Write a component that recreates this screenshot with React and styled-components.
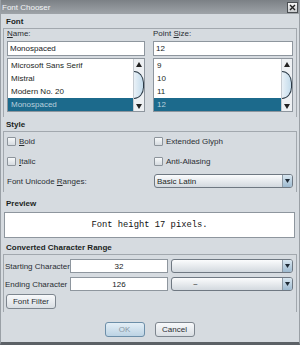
import React from 'react';
import styled, { createGlobalStyle } from 'styled-components';

const Global = createGlobalStyle`
  html, body { margin: 0; padding: 0; background: #d6dbe0; }
  body {
    font-family: "Liberation Sans", Arial, sans-serif;
    font-size: 8px;
    color: #1e2226;
  }
  * { box-sizing: border-box; }
`;

const Window = styled.div`
  width: 300px;
  height: 345px;
  display: flex;
  flex-direction: column;
  background: #d6dbe0;
  border-left: 1px solid #9aa0a6;
  border-right: 1px solid #9aa0a6;
  border-bottom: 3px solid #5c6166;
  overflow: hidden;
`;

const TitleBar = styled.div`
  height: 14px;
  flex: none;
  display: flex;
  align-items: center;
  justify-content: space-between;
  padding: 0 1px 0 1px;
  background: linear-gradient(#7b8085, #9ea3a8);
  color: #f2f4f6;
  font-size: 8px;
`;

const CloseBox = styled.div`
  width: 11px;
  height: 11px;
  display: flex;
  align-items: center;
  justify-content: center;
  border: 1px solid #4a4e52;
  background: linear-gradient(#f6f6f6, #c9cccf);
`;

const Header = styled.div`
  height: 14px;
  flex: none;
  display: flex;
  align-items: center;
  padding-left: 5px;
  margin-top: ${p => p.$mt || 0}px;
  font-weight: bold;
  color: #1b1f23;
`;

const Panel = styled.div`
  margin: 0 2px;
  border-top: 1px solid #a2a8ae;
  border-left: 1px solid #a2a8ae;
  border-right: 1px solid #a2a8ae;
  flex: none;
`;

const TwoCol = styled.div`
  display: grid;
  grid-template-columns: 138px 1fr;
  column-gap: 8px;
  row-gap: ${p => p.$rowGap || 0}px;
  padding: ${p => p.$pad};
`;

const Column = styled.div`
  display: flex;
  flex-direction: column;
`;

const Label = styled.div`
  height: 10px;
  line-height: 10px;
  color: #2a2e33;
  white-space: nowrap;
`;

const U = styled.span`
  text-decoration: underline;
  text-underline-offset: 1px;
`;

const Field = styled.div`
  height: 15px;
  margin-top: 2px;
  background: #fff;
  border: 1px solid #8e969e;
  display: flex;
  align-items: center;
  justify-content: ${p => (p.$center ? 'center' : 'flex-start')};
  padding: 0 2px;
  font-size: 8px;
  color: #15191d;
`;

const ListBox = styled.div`
  height: 54px;
  margin-top: 2px;
  border: 1px solid #8e969e;
  background: #fff;
  display: flex;
`;

const Items = styled.div`
  flex: 1;
  display: flex;
  flex-direction: column;
`;

const Item = styled.div`
  height: 13px;
  display: flex;
  align-items: center;
  padding-left: 3px;
  background: ${p => (p.$sel ? '#1c6a8c' : 'transparent')};
  color: ${p => (p.$sel ? '#b9d0dd' : '#1b1f23')};
`;

const ScrollBar = styled.div`
  width: 11px;
  display: flex;
  flex-direction: column;
  background: #edf0f3;
  border-left: 1px solid #c5cbd1;
`;

const Arrow = styled.div`
  height: 10px;
  display: flex;
  align-items: center;
  justify-content: center;
`;

const Track = styled.div`
  flex: 1;
  display: flex;
  flex-direction: column;
  padding-top: 2px;
`;

const Thumb = styled.div`
  height: 28px;
  width: 10px;
  background: linear-gradient(90deg, #e9f1f7, #c3dbeb);
  border: 1px solid #2d3b47;
  border-left: none;
  border-radius: 0 12px 12px 0 / 0 14px 14px 0;
`;

const CheckRow = styled.div`
  height: 14px;
  display: flex;
  align-items: center;
  gap: 3px;
  padding-left: ${p => p.$indent || 0}px;
  color: #2a2e33;
  white-space: nowrap;
`;

const Box = styled.div`
  width: 9px;
  height: 9px;
  border: 1px solid #8d949b;
  border-radius: 1px;
  background: linear-gradient(#f7f9fa, #d6dbe0);
`;

const Combo = styled.div`
  height: ${p => p.$h || 14}px;
  margin-left: ${p => p.$ml || 0}px;
  display: flex;
  border: 1px solid #6f7882;
  border-radius: 3px;
  background: linear-gradient(#fbfcfd, #e3e7eb 60%, #d3d9df);
  overflow: hidden;
`;

const ComboText = styled.div`
  flex: 1;
  display: flex;
  align-items: center;
  padding-left: ${p => p.$indent || 2}px;
  color: #1b1f23;
`;

const ComboBtn = styled.div`
  width: 10px;
  display: flex;
  align-items: center;
  justify-content: center;
  background: linear-gradient(#d8e6f0, #9ebad0);
  border-left: 1px solid #8e9aa5;
`;

const PreviewBox = styled.div`
  margin: 2px 4px 0 3px;
  height: 26px;
  flex: none;
  background: #fff;
  border: 1px solid #8e969e;
  display: flex;
  align-items: center;
  justify-content: center;
  font-family: "Liberation Mono", "Courier New", monospace;
  font-size: 8.8px;
  color: #111;
`;

const RangeGrid = styled.div`
  display: grid;
  grid-template-columns: 62px 98px 1fr;
  column-gap: 3px;
  row-gap: 4px;
  grid-auto-rows: 14px;
  padding: 4px 3px 3px 1px;
`;

const RangeLabel = styled.div`
  display: flex;
  align-items: center;
  color: #2a2e33;
  white-space: nowrap;
`;

const RangeField = styled(Field)`
  margin-top: 0;
  height: 14px;
`;

const ButtonRow = styled.div`
  grid-column: 1 / -1;
  display: flex;
  margin-top: -1px;
  height: 15px;
`;

const Button = styled.div`
  width: ${p => p.$w || 40}px;
  height: 15px;
  margin-left: ${p => p.$ml || 0}px;
  display: flex;
  align-items: center;
  justify-content: center;
  border: 1px solid ${p => (p.$primary ? '#6c8ea8' : '#7d858e')};
  border-radius: 3px;
  background: ${p =>
    p.$primary
      ? 'linear-gradient(#e3eef6, #bcd3e4)'
      : 'linear-gradient(#f8f9fb, #d9dee3)'};
  color: ${p => (p.$primary ? '#8a98a4' : '#2a2e33')};
  font-size: 8px;
`;

const Footer = styled.div`
  display: flex;
  justify-content: center;
  gap: 10px;
  margin-top: 10px;
  padding-right: 1px;
`;

const Up = () => (
  <svg width="6" height="5" viewBox="0 0 6 5"><path d="M3 0 L6 5 L0 5 Z" fill="#222" /></svg>
);
const Down = () => (
  <svg width="6" height="5" viewBox="0 0 6 5"><path d="M0 0 L6 0 L3 5 Z" fill="#222" /></svg>
);
const ComboArrow = () => (
  <svg width="5" height="4" viewBox="0 0 5 4"><path d="M0 0 L5 0 L2.5 4 Z" fill="#1e2a36" /></svg>
);

function List({ items, selected }) {
  return (
    <ListBox>
      <Items>
        {items.map(it => (
          <Item key={it} $sel={it === selected}>{it}</Item>
        ))}
      </Items>
      <ScrollBar>
        <Arrow><Up /></Arrow>
        <Track><Thumb /></Track>
        <Arrow><Down /></Arrow>
      </ScrollBar>
    </ListBox>
  );
}

function ComboBox({ text, indent, h, ml }) {
  return (
    <Combo $h={h} $ml={ml}>
      <ComboText $indent={indent}>{text}</ComboText>
      <ComboBtn><ComboArrow /></ComboBtn>
    </Combo>
  );
}

export default function App() {
  return (
    <>
      <Global />
      <Window>
        <TitleBar>
          <span>Font Chooser</span>
          <CloseBox>
            <svg width="7" height="7" viewBox="0 0 7 7">
              <path d="M1 1 L6 6 M6 1 L1 6" stroke="#222" strokeWidth="1.4" />
            </svg>
          </CloseBox>
        </TitleBar>

        <Header>Font</Header>
        <Panel>
          <TwoCol $pad="0 3px 5px 3px">
            <Column>
              <Label><U>N</U>ame:</Label>
              <Field>Monospaced</Field>
              <List
                items={['Microsoft Sans Serif', 'Mistral', 'Modern No. 20', 'Monospaced']}
                selected="Monospaced"
              />
            </Column>
            <Column>
              <Label>Point <U>S</U>ize:</Label>
              <Field>12</Field>
              <List items={['9', '10', '11', '12']} selected="12" />
            </Column>
          </TwoCol>
        </Panel>

        <Header>Style</Header>
        <Panel>
          <TwoCol $pad="2px 3px 4px 3px" $rowGap={6}>
            <CheckRow><Box /><span><U>B</U>old</span></CheckRow>
            <CheckRow $indent={1}><Box /><span>Extended Glyph</span></CheckRow>
            <CheckRow><Box /><span><U>I</U>talic</span></CheckRow>
            <CheckRow $indent={1}><Box /><span>Anti-Aliasin<U>g</U></span></CheckRow>
            <CheckRow><span>Font Unicode <U>R</U>anges:</span></CheckRow>
            <ComboBox text="Basic Latin" ml={1} />
          </TwoCol>
        </Panel>

        <Header $mt={4}>Preview</Header>
        <PreviewBox>Font height 17 pixels.</PreviewBox>

        <Header $mt={2}>Converted Character Range</Header>
        <Panel>
          <RangeGrid>
            <RangeLabel>Starting Character</RangeLabel>
            <RangeField $center>32</RangeField>
            <ComboBox text="" />
            <RangeLabel>Ending Character</RangeLabel>
            <RangeField $center>126</RangeField>
            <ComboBox text="~" indent={21} />
            <ButtonRow>
              <Button $w={50} $ml={1}>Font Filter</Button>
            </ButtonRow>
          </RangeGrid>
        </Panel>

        <Footer>
          <Button $primary>OK</Button>
          <Button>Cancel</Button>
        </Footer>
      </Window>
    </>
  );
}
